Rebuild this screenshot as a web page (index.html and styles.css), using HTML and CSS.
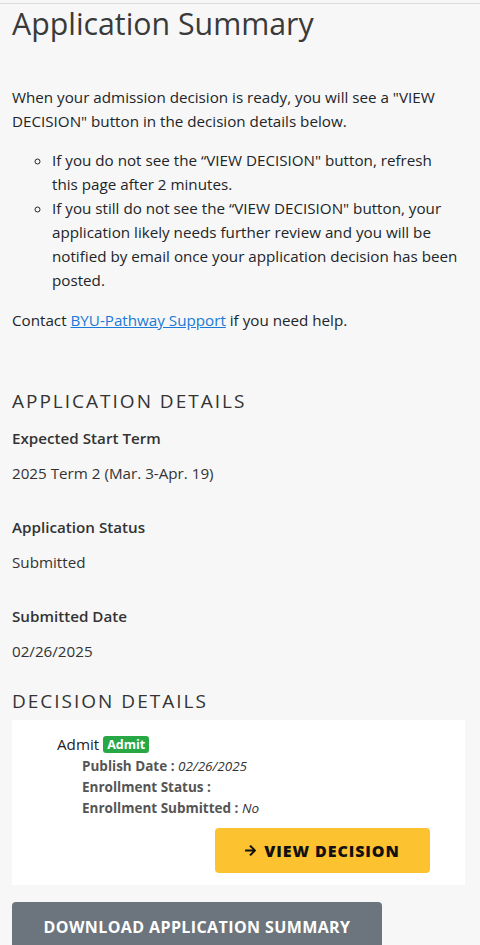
FILE: index.html
```html
<!DOCTYPE html>
<html lang="en">
<head>
<meta charset="utf-8">
<title>Application Summary</title>
<link rel="stylesheet" href="styles.css">
</head>
<body>
<div class="page">
  <h1 class="title">Application Summary</h1>
  <p class="intro">When your admission decision is ready, you will see a "VIEW DECISION" button in the decision details below.</p>
  <ul class="tips">
    <li>If you do not see the “VIEW DECISION" button, refresh this page after 2 minutes.</li>
    <li>If you still do not see the “VIEW DECISION" button, your application likely needs further review and you will be notified by email once your application decision has been posted.</li>
  </ul>
  <p class="contact">Contact <a href="#">BYU-Pathway Support</a> if you need help.</p>

  <h2 class="section-title app-title">Application Details</h2>
  <div class="field">
    <div class="label">Expected Start Term</div>
    <div class="value">2025 Term 2 (Mar. 3-Apr. 19)</div>
  </div>
  <div class="field">
    <div class="label">Application Status</div>
    <div class="value">Submitted</div>
  </div>
  <div class="field last">
    <div class="label">Submitted Date</div>
    <div class="value">02/26/2025</div>
  </div>

  <h2 class="section-title dec-title">Decision Details</h2>
  <div class="card">
    <div class="decision">Admit <span class="badge">Admit</span></div>
    <div class="meta">
      <div><b>Publish Date :</b> <i>02/26/2025</i></div>
      <div><b>Enrollment Status :</b></div>
      <div><b>Enrollment Submitted :</b> <i>No</i></div>
    </div>
    <div class="actions">
      <button class="btn-view"><svg class="arrow" viewBox="0 0 448 512" width="11" height="13"><path fill="currentColor" d="M190.5 66.9l22.2-22.2c9.4-9.4 24.6-9.4 33.9 0L441 239c9.4 9.4 9.4 24.6 0 33.9L246.6 467.3c-9.4 9.4-24.6 9.4-33.9 0l-22.2-22.2c-9.5-9.5-9.3-25 .4-34.3L311.4 296H24c-13.3 0-24-10.7-24-24v-32c0-13.3 10.7-24 24-24h287.4L190.9 101.2c-9.8-9.3-10-24.8-.4-34.3z"/></svg>View Decision</button>
    </div>
  </div>
  <button class="btn-download">Download Application Summary</button>
</div>
</body>
</html>
```
FILE: styles.css
```css
html, body {
  margin: 0;
  padding: 0;
  background: #f7f7f7;
}
body {
  font-family: "Open Sans", "Noto Sans", sans-serif;
  font-size: 15.2px;
  line-height: 24px;
  color: #212529;
  overflow: hidden;
}
.page {
  margin-top: 3px;
  border-top: 1px solid #dcdcdc;
  padding: 0 15px 0 12px;
}
.title {
  margin: 0;
  font-size: 30.3px;
  line-height: 40px;
  font-weight: 400;
  color: #3a3a3a;
}
.intro {
  margin: 41px 0 15px;
}
.tips {
  margin: 0 0 16px;
  padding-left: 40px;
  padding-right: 4px;
  list-style-type: circle;
}
.contact {
  margin: 0;
}
.contact a {
  color: #1a7ad8;
  text-decoration: underline;
}
.section-title {
  margin: 0;
  font-size: 19px;
  line-height: 24px;
  font-weight: 400;
  letter-spacing: 2px;
  text-transform: uppercase;
  color: #333;
}
.app-title {
  margin-top: 57px;
  margin-bottom: 13px;
}
.field {
  margin-bottom: 30px;
}
.field.last {
  margin-bottom: 26px;
}
.label {
  font-weight: 600;
  color: #333;
  margin-bottom: 11px;
}
.value {
  color: #333;
}
.dec-title {
  margin-bottom: 7px;
}
.card {
  background: #fff;
  padding: 12px 35px 12px 45px;
}
.decision {
  font-size: 15.2px;
  color: #222;
  line-height: 24px;
}
.badge {
  display: inline-block;
  background: #28a745;
  color: #fff;
  font-weight: 700;
  font-size: 12.5px;
  line-height: 17px;
  padding: 0 4px;
  border-radius: 3px;
  vertical-align: 1px;
}
.meta {
  padding-left: 25px;
  font-size: 13.5px;
  line-height: 21px;
  color: #555;
}
.meta b {
  font-weight: 700;
}
.meta i {
  color: #333;
}
.actions {
  display: flex;
  justify-content: flex-end;
  margin-top: 9px;
}
.btn-view {
  width: 215px;
  height: 45px;
  border: none;
  border-radius: 4px;
  background: #fdc22f;
  color: #111;
  font-family: "Open Sans", "Noto Sans", sans-serif;
  font-weight: 800;
  font-size: 16px;
  letter-spacing: 0.9px;
  text-transform: uppercase;
  display: flex;
  align-items: center;
  justify-content: center;
  gap: 8px;
}
.arrow {
  display: block;
}
.btn-download {
  margin-top: 17px;
  width: 370px;
  height: 50px;
  border: none;
  border-radius: 4px;
  background: #6c757d;
  color: #fff;
  font-family: "Open Sans", "Noto Sans", sans-serif;
  font-weight: 700;
  font-size: 16px;
  letter-spacing: 0.4px;
  text-transform: uppercase;
  padding: 0;
  line-height: 44px;
  display: block;
}
```
